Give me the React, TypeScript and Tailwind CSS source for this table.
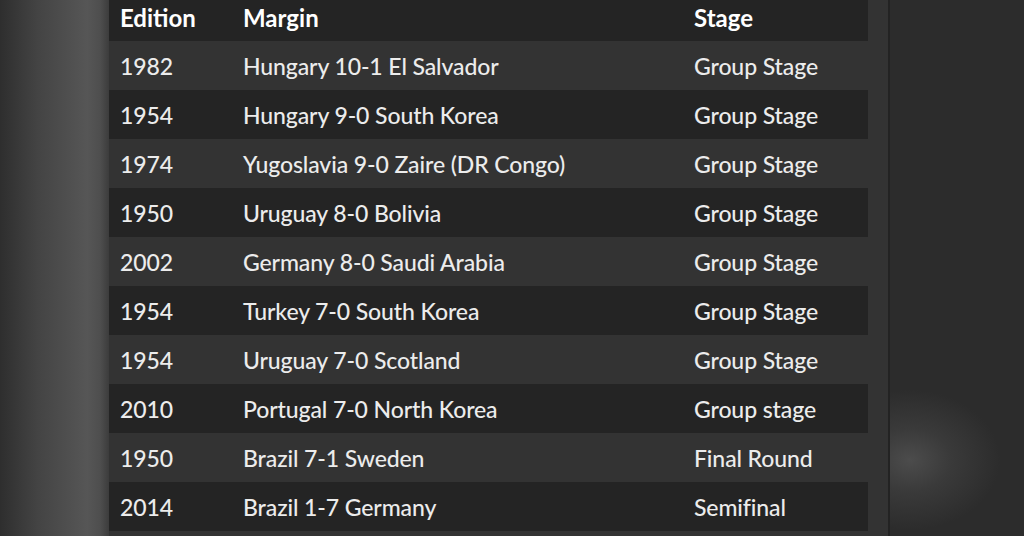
import React from "react";

const rows: [string, string, string][] = [
  ["1982", "Hungary 10-1 El Salvador", "Group Stage"],
  ["1954", "Hungary 9-0 South Korea", "Group Stage"],
  ["1974", "Yugoslavia 9-0 Zaire (DR Congo)", "Group Stage"],
  ["1950", "Uruguay 8-0 Bolivia", "Group Stage"],
  ["2002", "Germany 8-0 Saudi Arabia", "Group Stage"],
  ["1954", "Turkey 7-0 South Korea", "Group Stage"],
  ["1954", "Uruguay 7-0 Scotland", "Group Stage"],
  ["2010", "Portugal 7-0 North Korea", "Group stage"],
  ["1950", "Brazil 7-1 Sweden", "Final Round"],
  ["2014", "Brazil 1-7 Germany", "Semifinal"],
];

export default function App() {
  return (
    <div
      className="flex w-[1024px] h-[536px] overflow-hidden bg-[#2c2c2c]"
      style={{ fontFamily: "Lato, 'Open Sans', sans-serif" }}
    >
      <div className="w-[109px] h-full bg-[linear-gradient(90deg,#2e2e2e_0%,#444_35%,#565656_80%,#4e4e4e_92%,#3c3c3c_100%)]" />
      <div className="w-[779px] h-full bg-[#333333]">
        <div className="w-[759px]">
          <div className="flex h-[41px] items-center pb-[6px] bg-[#242424] text-white font-bold text-[24px]">
            <div className="w-[134px] pl-[11px]">Edition</div>
            <div className="w-[451px]">Margin</div>
            <div className="flex-1">Stage</div>
          </div>
          {rows.map((r, i) => (
            <div
              key={i}
              className={`flex h-[49px] items-center pt-[2px] text-[23px] font-medium tracking-[-0.1px] text-[#ececec] ${
                i % 2 === 0 ? "bg-[#333333]" : "bg-[#242424]"
              }`}
            >
              <div className="w-[134px] pl-[11px]">{r[0]}</div>
              <div className="w-[451px]">{r[1]}</div>
              <div className="flex-1">{r[2]}</div>
            </div>
          ))}
        </div>
      </div>
      <div className="w-[2px] h-full bg-[#232323]" />
      <div className="flex-1 h-full bg-[radial-gradient(ellipse_90px_70px_at_20px_460px,#4c4c4c_0%,#3a3a3a_45%,#2c2c2c_100%)]" />
    </div>
  );
}
